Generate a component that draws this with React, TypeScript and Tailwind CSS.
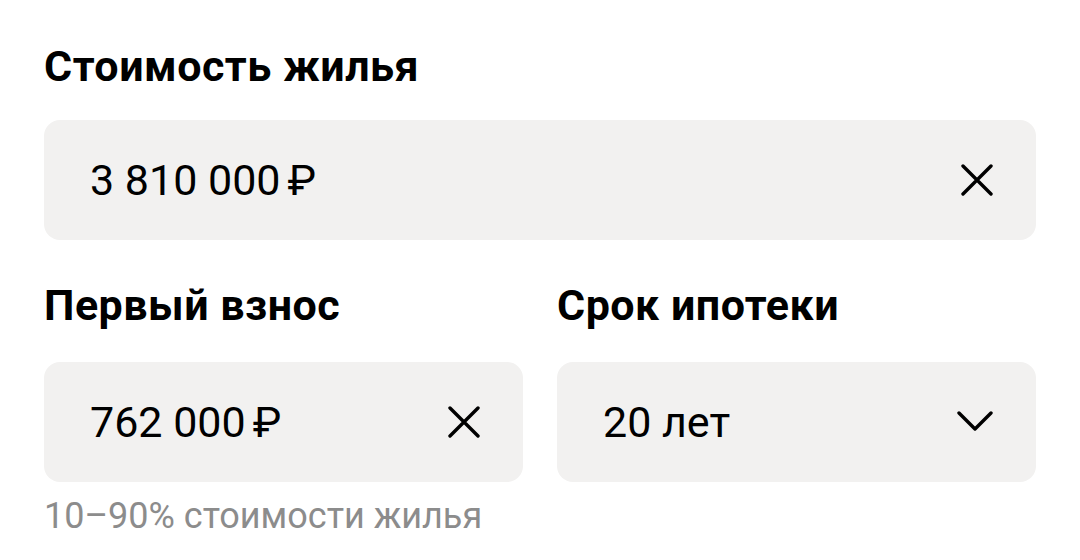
function ClearIcon() {
  return (
    <svg width="32" height="32" viewBox="0 0 32 32" className="shrink-0">
      <path d="M2 2L30 30M30 2L2 30" stroke="#000" strokeWidth="3.4" strokeLinecap="round" fill="none" />
    </svg>
  );
}

function ChevronIcon() {
  return (
    <svg width="36" height="22" viewBox="0 0 36 22" className="shrink-0">
      <path d="M2 2L18 18L34 2" stroke="#000" strokeWidth="3.4" strokeLinecap="round" strokeLinejoin="round" fill="none" />
    </svg>
  );
}

function Field({ value, rub, icon }: { value: string; rub?: boolean; icon: "clear" | "select" }) {
  return (
    <div className="h-[120px] rounded-[16px] bg-[#f2f1f0] flex items-center justify-between pl-[46px] pr-[43px]">
      <span className="text-[43px] leading-none text-black">
        {value}
        {rub && <span className="ml-[7px]">₽</span>}
      </span>
      {icon === "clear" ? <ClearIcon /> : <ChevronIcon />}
    </div>
  );
}

const title = "text-[43px] leading-[48px] tracking-[0.5px] font-bold text-black";

export default function App() {
  return (
    <div className="w-[1080px] h-[560px] bg-white px-[44px] pt-[42px] font-['Roboto',sans-serif] overflow-hidden">
      <h2 className={`${title} mb-[30px]`}>Стоимость жилья</h2>
      <Field value="3 810 000" rub icon="clear" />
      <div className="grid grid-cols-2 gap-x-[34px] mt-[41px]">
        <div>
          <h2 className={`${title} mb-[33px]`}>Первый взнос</h2>
          <Field value="762 000" rub icon="clear" />
          <p className="text-[36px] leading-[40px] text-[#8c8c8c] mt-[14px]">10–90% стоимости жилья</p>
        </div>
        <div>
          <h2 className={`${title} mb-[33px]`}>Срок ипотеки</h2>
          <Field value="20 лет" icon="select" />
        </div>
      </div>
    </div>
  );
}
